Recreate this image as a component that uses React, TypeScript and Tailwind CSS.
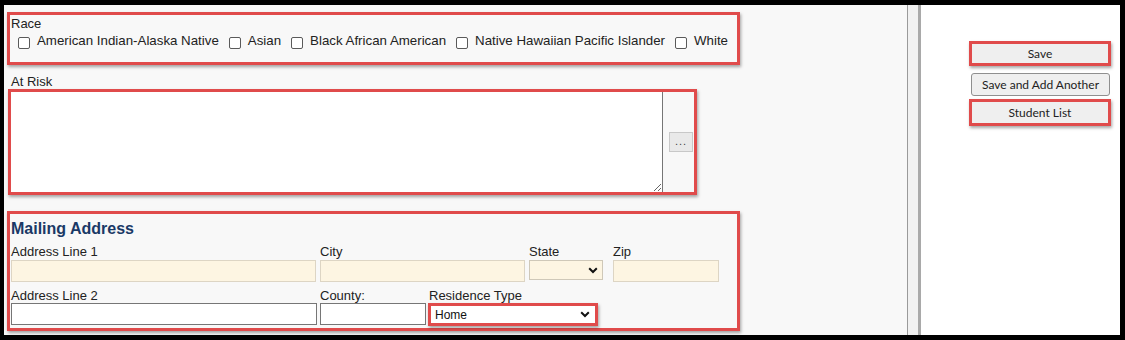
import React from "react";

const RED = "border-[3px] border-[#e04b4b] shadow-[1px_2px_3px_rgba(0,0,0,0.35)]";

function Box({ label }: { label: string }) {
  return (
    <span className="flex items-start gap-[7px]">
      <span className="mt-[4px] w-[12px] h-[12px] rounded-[2px] border border-[#5a5a5a] bg-white shrink-0" />
      <span>{label}</span>
    </span>
  );
}

function Chevron() {
  return (
    <svg width="10" height="7" viewBox="0 0 10 7" className="shrink-0">
      <path d="M1.2 1.3 L5 5 L8.8 1.3" stroke="#111" strokeWidth="2" fill="none" />
    </svg>
  );
}

function Label({ children }: { children: React.ReactNode }) {
  return <div className="leading-[15px] text-[13px] text-[#222] whitespace-nowrap">{children}</div>;
}

export default function App() {
  return (
    <div
      className="w-[1125px] h-[340px] bg-black pt-[5px] pl-[4px] overflow-hidden"
      style={{ fontFamily: '"Liberation Sans", Arial, sans-serif' }}
    >
      <div className="flex w-[1116px] h-[330px]">
        {/* left panel */}
        <div className="w-[903px] h-full bg-[#f8f8f8] pl-[3px] pt-[7px] text-[13px] text-[#222]">
          {/* Race */}
          <div className={`w-[733px] h-[53px] ${RED} pt-[1px]`}>
            <div className="leading-[15px] pl-[1px]">Race</div>
            <div className="flex gap-[10px] leading-[15px] text-[13.3px] pl-[8px] mt-[2px] whitespace-nowrap">
              <Box label="American Indian-Alaska Native" />
              <Box label="Asian" />
              <Box label="Black African American" />
              <Box label="Native Hawaiian Pacific Islander" />
              <Box label="White" />
            </div>
          </div>

          {/* At Risk */}
          <div className="leading-[15px] mt-[9px] pl-[4px]">At Risk</div>
          <div className={`ml-[1px] w-[689px] h-[106px] ${RED} flex items-center`}>
            <textarea className="w-[652px] h-full bg-white border-0 border-r border-[#767676] outline-none" />
            <div className="ml-[6px] w-[24px] h-[20px] bg-[#e9e9e9] border border-[#c8c8c8] flex items-center justify-center text-[11px] leading-none text-[#444] pb-[2px] tracking-[1px]">
              ...
            </div>
          </div>

          {/* Mailing Address */}
          <div className={`mt-[16px] w-[733px] h-[120px] ${RED} pl-[1px]`}>
            <div className="mt-[6px] text-[16px] leading-[18px] font-bold text-[#1a3966]">Mailing Address</div>
            <div className="flex items-start mt-[6px]">
              <div className="flex flex-col">
                <Label>Address Line 1</Label>
                <div className="mt-[1px] w-[305px] h-[22px] bg-[#fdf5e2] border border-[#ddd5c4]" />
              </div>
              <div className="flex flex-col ml-[4px]">
                <Label>City</Label>
                <div className="mt-[1px] w-[205px] h-[22px] bg-[#fdf5e2] border border-[#ddd5c4]" />
              </div>
              <div className="flex flex-col ml-[4px]">
                <Label>State</Label>
                <div className="mt-[1px] w-[74px] h-[20px] bg-[#fdf5e2] border border-[#cfc8b8] flex items-center justify-end pr-[4px]">
                  <Chevron />
                </div>
              </div>
              <div className="flex flex-col ml-[10px]">
                <Label>Zip</Label>
                <div className="mt-[1px] w-[106px] h-[22px] bg-[#fdf5e2] border border-[#ddd5c4]" />
              </div>
            </div>
            <div className="flex items-start mt-[6px]">
              <div className="flex flex-col">
                <Label>Address Line 2</Label>
                <div className="w-[306px] h-[22px] bg-white border border-[#767676]" />
              </div>
              <div className="flex flex-col ml-[3px]">
                <Label>County:</Label>
                <div className="w-[106px] h-[22px] bg-white border border-[#767676]" />
              </div>
              <div className="flex flex-col ml-[2px]">
                <div className="pl-[1px]">
                  <Label>Residence Type</Label>
                </div>
                <div className={`w-[170px] h-[23px] ${RED} bg-white flex items-center justify-between pl-[4px] pr-[5px]`}>
                  <span className="text-[12px] leading-none text-[#111]">Home</span>
                  <Chevron />
                </div>
              </div>
            </div>
          </div>
        </div>

        {/* divider */}
        <div className="w-[1px] h-full bg-[#9a9a9a]" />
        <div className="w-[10px] h-full bg-[#f1f1f1]" />
        <div className="w-[3px] h-full bg-[#a9a9a9]" />

        {/* right panel */}
        <div
          className="flex-1 h-full bg-white flex flex-col items-end pr-[9px] pt-[36px] text-[12px] text-[#222]"
          style={{ fontFamily: 'Lato, "Open Sans", sans-serif' }}
        >
          <div className={`w-[142px] h-[25px] ${RED} bg-[#efefef] flex items-center justify-center`}>Save</div>
          <div className="mt-[7px] mr-[1px] w-[139px] h-[23px] bg-[#efefef] border border-[#8f8f8f] rounded-[3px] flex items-center justify-center">
            Save and Add Another
          </div>
          <div className={`mt-[3px] w-[142px] h-[27px] ${RED} bg-[#efefef] flex items-center justify-center`}>Student List</div>
        </div>
      </div>
    </div>
  );
}
